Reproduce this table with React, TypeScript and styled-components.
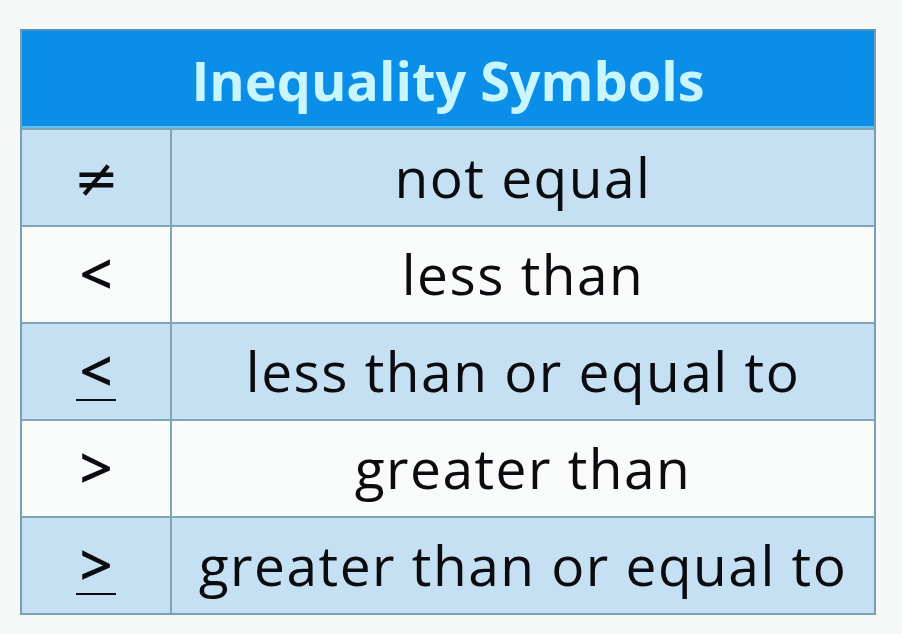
import React, { ReactElement } from 'react'
import styled, { createGlobalStyle } from 'styled-components'

const GlobalStyle = createGlobalStyle`
  html, body {
    margin: 0;
    padding: 0;
    background: #f6f7f7;
  }
`

const Page = styled.div`
  width: 902px;
  height: 634px;
  padding: 29px 0 0 20px;
  box-sizing: border-box;
`

const Table = styled.div`
  display: grid;
  grid-template-columns: 150px 1fr;
  grid-template-rows: 97px;
  grid-auto-rows: 97px;
  width: 856px;
  border: 2px solid #77a1b0;
  border-top-color: #4d93bd;
  box-sizing: border-box;
  font-family: 'Open Sans', 'DejaVu Sans', sans-serif;
  color: #0c0c10;
`

const Header = styled.div`
  grid-column: 1 / -1;
  display: flex;
  align-items: center;
  justify-content: center;
  background: #0b8ee8;
  border-bottom: 2px solid #5fc2ef;
  box-sizing: border-box;
  color: #c9f5ff;
  font-weight: 700;
  font-size: 54px;
  padding-top: 2px;
`

const Cell = styled.div<{ $shaded: boolean }>`
  display: flex;
  align-items: center;
  justify-content: center;
  background: ${({ $shaded }) => ($shaded ? '#c4e0f2' : '#f9fbfb')};
  border-top: 2px solid #7fa6b4;
  box-sizing: border-box;
`

const SymbolCell = styled(Cell)`
  border-right: 2px solid #7fa6b4;
  font-size: 58px;
  font-weight: 600;
  padding-bottom: 4px;
`

const NameCell = styled(Cell)`
  font-size: 55px;
  letter-spacing: 1.5px;
  padding-bottom: 2px;
`

const NotEqual = styled.span`
  font-family: 'DejaVu Sans', sans-serif;
  font-weight: 400;
  font-size: 54px;
  line-height: 1;
  margin-top: 6px;
`

const Underlined = styled.span`
  display: inline-block;
  line-height: 1;
  padding: 0 3px;
  margin-top: 3px;
  border-bottom: 2px solid #0c0c10;
`

type Row = { symbol: ReactElement | string; name: string }

const rows: Row[] = [
  { symbol: <NotEqual>≠</NotEqual>, name: 'not equal' },
  { symbol: '<', name: 'less than' },
  { symbol: <Underlined>&lt;</Underlined>, name: 'less than or equal to' },
  { symbol: '>', name: 'greater than' },
  { symbol: <Underlined>&gt;</Underlined>, name: 'greater than or equal to' },
]

const App = (): ReactElement => {
  return (
    <>
      <GlobalStyle />
      <Page>
        <Table>
          <Header>Inequality Symbols</Header>
          {rows.map((row, i) => (
            <React.Fragment key={row.name}>
              <SymbolCell $shaded={i % 2 === 0}>{row.symbol}</SymbolCell>
              <NameCell $shaded={i % 2 === 0}>{row.name}</NameCell>
            </React.Fragment>
          ))}
        </Table>
      </Page>
    </>
  )
}

export default App
